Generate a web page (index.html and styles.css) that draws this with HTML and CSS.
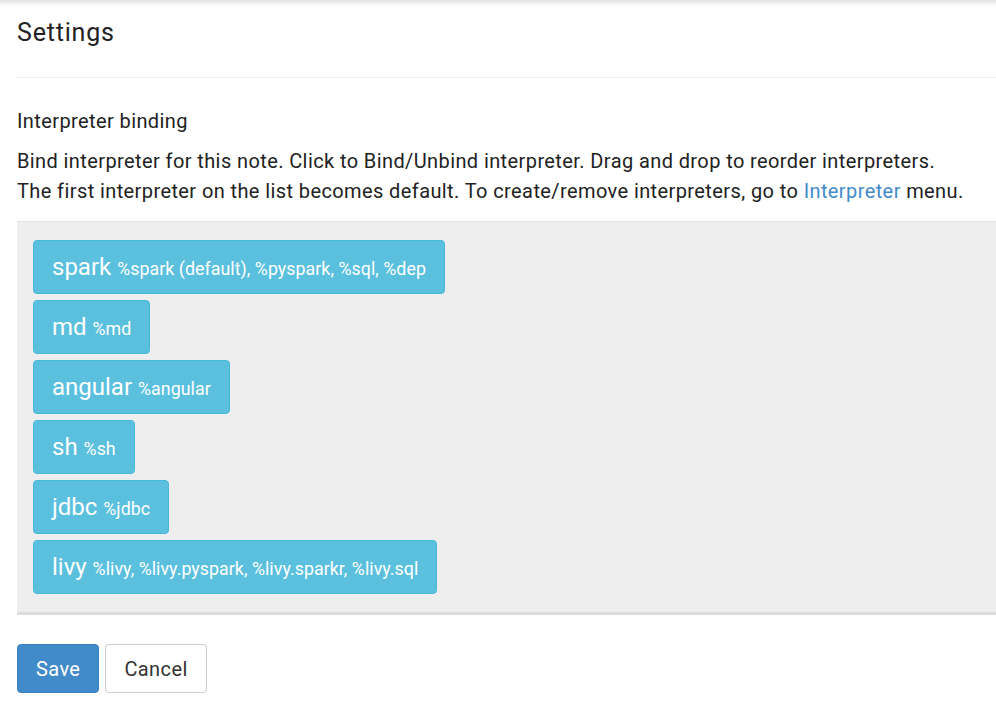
FILE: index.html
```html
<!DOCTYPE html>
<html>
<head>
<meta charset="utf-8">
<link rel="stylesheet" href="styles.css">
</head>
<body>
<div class="topshade"></div>
<div class="page">
  <h3 class="title">Settings</h3>
  <hr class="rule">
  <h4 class="subtitle">Interpreter binding</h4>
  <p class="desc">Bind interpreter for this note. Click to Bind/Unbind interpreter. Drag and drop to reorder interpreters.<br>The first interpreter on the list becomes default. To create/remove interpreters, go to <a class="link" href="#">Interpreter</a> menu.</p>
  <div class="panel">
    <div class="binding"><span class="name">spark</span> <span class="alias">%spark (default), %pyspark, %sql, %dep</span></div>
    <div class="binding"><span class="name">md</span> <span class="alias">%md</span></div>
    <div class="binding"><span class="name">angular</span> <span class="alias">%angular</span></div>
    <div class="binding"><span class="name">sh</span> <span class="alias">%sh</span></div>
    <div class="binding"><span class="name">jdbc</span> <span class="alias">%jdbc</span></div>
    <div class="binding"><span class="name">livy</span> <span class="alias">%livy, %livy.pyspark, %livy.sparkr, %livy.sql</span></div>
  </div>
  <div class="actions">
    <button class="btn btn-primary">Save</button>
    <button class="btn btn-default">Cancel</button>
  </div>
</div>
</body>
</html>
```
FILE: styles.css
```css
html, body {
  margin: 0;
  padding: 0;
  background: #fff;
  overflow: hidden;
}
body {
  font-family: Roboto, "Liberation Sans", sans-serif;
  color: #333;
}
.topshade {
  height: 6px;
  background: linear-gradient(to bottom, #e2e2e2, #fff);
}
.page {
  padding-left: 17px;
  width: 1100px;
}
.title {
  font-size: 25px;
  letter-spacing: 0.8px;
  font-weight: 400;
  margin: 0;
  padding-top: 13px;
  line-height: 28px;
  color: #222;
}
.rule {
  border: 0;
  border-top: 1px solid #eee;
  margin: 30px 0 0 0;
}
.subtitle {
  font-size: 20px;
  letter-spacing: 0.4px;
  font-weight: 400;
  margin: 31px 0 0 0;
  line-height: 24px;
  color: #222;
}
.desc {
  font-size: 20px;
  letter-spacing: 0.4px;
  line-height: 30px;
  margin: 13px 0 0 0;
  color: #222;
}
.link {
  color: #428bca;
  text-decoration: none;
}
.panel {
  margin-top: 15px;
  background: #eee;
  border-top: 1px solid #e3e3e3;
  border-bottom: 3px solid #ddd;
  padding: 18px 16px 18px 16px;
  display: flex;
  flex-direction: column;
  align-items: flex-start;
  gap: 6px;
}
.binding {
  display: block;
  background: #5bc0de;
  border: 1px solid #46b8da;
  border-radius: 4px;
  color: #fff;
  height: 52px;
  line-height: 52px;
  padding: 0 18px;
  white-space: nowrap;
  font-size: 24px;
}
.name {
  font-size: 24px;
}
.alias {
  font-size: 17.8px;
  letter-spacing: 0.05px;
}
.actions {
  margin-top: 29px;
  display: flex;
  gap: 6px;
}
.btn {
  font-family: Roboto, "Liberation Sans", sans-serif;
  font-size: 20px;
  letter-spacing: 0.4px;
  height: 49px;
  border-radius: 4px;
  padding: 0 18px;
  cursor: pointer;
}
.btn-primary {
  background: #428bca;
  border: 1px solid #3a80be;
  color: #fff;
}
.btn-default {
  background: #fff;
  border: 1px solid #ccc;
  color: #333;
}
```
